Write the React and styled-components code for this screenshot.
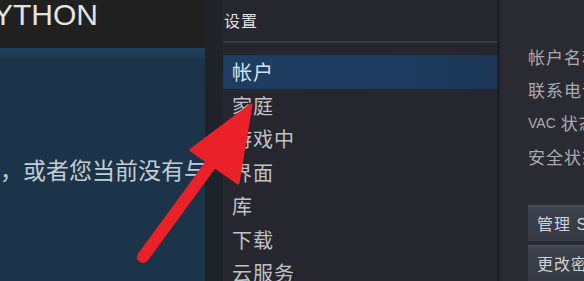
import styled, { createGlobalStyle } from 'styled-components';

const GlobalStyle = createGlobalStyle`
  html, body {
    margin: 0;
    padding: 0;
    background: #2a2a33;
    overflow: hidden;
  }
`;

const Frame = styled.div`
  position: relative;
  width: 584px;
  height: 281px;
  display: flex;
  overflow: hidden;
  font-family: "Liberation Sans", "Noto Sans CJK SC", sans-serif;
`;

const LeftPane = styled.div`
  width: 205px;
  flex-shrink: 0;
  display: flex;
  flex-direction: column;
  overflow: hidden;
`;

const TopBar = styled.div`
  height: 48px;
  background: #202021;
  color: #e4e4e4;
  font-size: 30px;
  line-height: 30px;
  padding-top: 0;
  box-sizing: border-box;
  text-indent: -7px;
  white-space: nowrap;
  overflow: hidden;
`;

const Hero = styled.div`
  flex: 1;
  background: linear-gradient(#21405a 0, #1d3a52 9px, #1b344a 10px, #1b3449 100%);
  padding-top: 108px;
  box-sizing: border-box;
`;

const Message = styled.div`
  color: #c3ccd4;
  font-size: 23px;
  line-height: 30px;
  white-space: nowrap;
  overflow: hidden;
`;

const Sidebar = styled.div`
  width: 292px;
  flex-shrink: 0;
  display: flex;
  background: #25262e;
`;

const EdgeStrip = styled.div`
  width: 18px;
  background: linear-gradient(#202329 0, #1e2229 100%);
`;

const SidebarBody = styled.div`
  flex: 1;
  display: flex;
  flex-direction: column;
`;

const Title = styled.div`
  height: 43px;
  padding-left: 1px;
  color: #e2e2e2;
  font-size: 16px;
  line-height: 44px;
  letter-spacing: 1px;
  border-bottom: 2px solid #3a3c44;
  box-sizing: border-box;
`;

const Menu = styled.div`
  padding-top: 12px;
  display: flex;
  flex-direction: column;
`;

const MenuItem = styled.div`
  height: 33.5px;
  padding-left: 9px;
  display: flex;
  align-items: center;
  font-size: 20px;
  letter-spacing: 1px;
  color: ${p => (p.$active ? '#d6e4f1' : '#c0c2c5')};
  background: ${p => (p.$active ? 'linear-gradient(90deg, #1e3d62, #1c3a5c 80%, #1d3856)' : 'transparent')};
`;

const Rule = styled.div`
  width: 3px;
  flex-shrink: 0;
  background: #1e1f25;
`;

const Main = styled.div`
  flex: 1;
  padding: 39.5px 0 0 28px;
  display: flex;
  flex-direction: column;
  background: #2a2a33;
  overflow: hidden;
`;

const Label = styled.div`
  height: 37px;
  display: flex;
  align-items: center;
  font-size: 17px;
  letter-spacing: 1px;
  color: #a9abb0;
  white-space: nowrap;
`;

const Abbr = styled.span`
  font-size: 14px;
  letter-spacing: 0;
  margin-right: 5px;
`;

const Button = styled.div`
  height: 40px;
  margin-top: ${p => p.$gap || 4}px;
  padding-left: 9px;
  display: flex;
  align-items: center;
  font-size: 16px;
  letter-spacing: 1px;
  color: #cfd3d8;
  white-space: nowrap;
  background: linear-gradient(#4a515c 0, #3d434e 3px, #343943 100%);
`;

const Arrow = styled.svg`
  position: absolute;
  left: 0;
  top: 0;
  pointer-events: none;
`;

const menu = ['帐户', '家庭', '游戏中', '界面', '库', '下载', '云服务'];

export default function App() {
  return (
    <Frame>
      <GlobalStyle />
      <LeftPane>
        <TopBar>YTHON</TopBar>
        <Hero>
          <Message>，或者您当前没有与</Message>
        </Hero>
      </LeftPane>
      <Sidebar>
        <EdgeStrip />
        <SidebarBody>
          <Title>设置</Title>
          <Menu>
            {menu.map((m, i) => (
              <MenuItem key={m} $active={i === 0}>{m}</MenuItem>
            ))}
          </Menu>
        </SidebarBody>
      </Sidebar>
      <Rule />
      <Main>
        <Label>帐户名称</Label>
        <Label>联系电话</Label>
        <Label><Abbr>VAC</Abbr>状态</Label>
        <Label>安全状态</Label>
        <Button $gap={32}>管理 Steam 令牌</Button>
        <Button>更改密码</Button>
      </Main>
      <Arrow width="584" height="281" viewBox="0 0 584 281">
        <line x1="143" y1="257" x2="214" y2="160" stroke="#ea2129" strokeWidth="12" strokeLinecap="round" />
        <polygon points="251,105 191,150 238,183" fill="#ea2129" stroke="#ea2129" strokeWidth="3" strokeLinejoin="round" />
      </Arrow>
    </Frame>
  );
}
